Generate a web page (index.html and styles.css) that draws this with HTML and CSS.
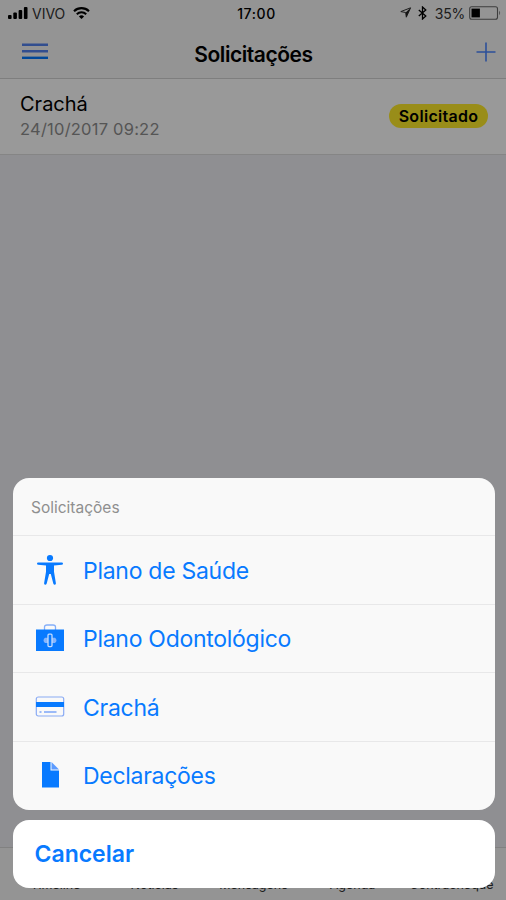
FILE: index.html
```html
<!DOCTYPE html>
<html lang="pt-BR">

<head>
    <meta charset="UTF-8">
    <meta name="viewport" content="width=device-width, initial-scale=1.0">
    <title>Solicitações</title>
    <link rel="stylesheet" href="styles.css">
</head>

<body>
    <div class="app">
        <header class="header">
            <div class="status-bar">
                <div class="status-left">
                    <svg class="signal" width="20" height="12" viewBox="0 0 20 12">
                        <rect x="0" y="8" width="3.6" height="4" rx="1" />
                        <rect x="5.3" y="5.5" width="3.6" height="6.5" rx="1" />
                        <rect x="10.6" y="3" width="3.6" height="9" rx="1" />
                        <rect x="15.9" y="0" width="3.6" height="12" rx="1" />
                    </svg>
                    <span class="carrier">VIVO</span>
                    <svg class="wifi" width="17" height="12" viewBox="0 0 17 12">
                        <path d="M1 4.2a10.8 10.8 0 0 1 15 0M3.8 7.2a6.8 6.8 0 0 1 9.4 0" fill="none" stroke="#000" stroke-width="2.1" />
                        <path d="M8.5 12L5.9 9.5a3.8 3.8 0 0 1 5.2 0z" />
                    </svg>
                </div>
                <span class="clock">17:00</span>
                <div class="status-right">
                    <svg class="location" width="12" height="12" viewBox="0 0 12 12">
                        <path d="M10.6 .8L.8 4.6l4.9.9.6 4.7z" fill="none" stroke="#333" stroke-width="1" stroke-linejoin="round" />
                        <path d="M10.6 .8L5.7 5.5l.6 4.7z" fill="#222" />
                    </svg>
                    <svg class="bluetooth" width="9" height="14" viewBox="0 0 9 14">
                        <path d="M.8 3.9l7 6.1-3.3 3V1l3.3 3-7 6.1" fill="none" stroke="#000" stroke-width="1.3" />
                    </svg>
                    <span class="percent">35%</span>
                    <svg class="battery" width="33" height="14" viewBox="0 0 33 14">
                        <rect x=".7" y=".7" width="27.8" height="12.6" rx="2" fill="none" stroke="#666" stroke-width="1.1" />
                        <rect x="2.5" y="2.6" width="8.4" height="8.8" />
                        <path d="M30.2 4.8q1.9 2.2 0 4.4z" fill="#777" />
                    </svg>
                </div>
            </div>
            <div class="nav-bar">
                <svg class="menu" width="26" height="17" viewBox="0 0 26 17">
                    <path d="M0 1.8h26M0 8.2h26" stroke="#5483ef" stroke-width="2.4" />
                    <path d="M0 14.8h26" stroke="#0078ff" stroke-width="2.4" />
                </svg>
                <h1 class="title">Solicitações</h1>
                <svg class="add" width="20" height="20" viewBox="0 0 20 20">
                    <path d="M10 .5v19M.5 10h19" stroke="#4a85ff" stroke-width="1.6" />
                </svg>
            </div>
        </header>

        <main class="content">
            <div class="request">
                <div>
                    <div class="request-name">Crachá</div>
                    <div class="request-date">24/10/2017 09:22</div>
                </div>
                <span class="badge">Solicitado</span>
            </div>
        </main>

        <nav class="tabs">
            <span>Timeline</span>
            <span>Notícias</span>
            <span>Mensagens</span>
            <span>Agenda</span>
            <span>Contracheque</span>
        </nav>
    </div>

    <div class="overlay">
        <div class="sheet">
            <div class="sheet-title">Solicitações</div>
            <div class="option">
                <svg class="icon" width="30" height="32" viewBox="0 0 30 32">
                    <circle cx="15" cy="4" r="3.1" />
                    <path d="M3.2 8.4h23.6a1.1 1.1 0 0 1 0 2.4L19 11.6v6.2l1.9 11.4a1.3 1.3 0 0 1-2.6.4L15.8 20h-1.6l-2.5 9.6a1.3 1.3 0 0 1-2.6-.4L11 17.8v-6.2l-7.8-.8a1.1 1.1 0 0 1 0-2.4z" />
                </svg>
                <span>Plano de Saúde</span>
            </div>
            <div class="option">
                <svg class="icon" width="30" height="32" viewBox="0 0 30 32">
                    <path d="M9.5 7V4q0-2 2.5-2h6q2.5 0 2.5 2v3" fill="none" stroke="#84aef9" stroke-width="1.3" />
                    <path d="M1 6.5h28V28H1z" />
                    <path d="M10 14.8h10q1.5 1.2 1.5 2.6T20 20H10q-1.5-1.2-1.5-2.6t1.5-2.6z" fill="#87b5fb" />
                    <rect x="13" y="11.2" width="4" height="12.4" rx="1" stroke="#c4dcff" stroke-width="1.3" />
                </svg>
                <span>Plano Odontológico</span>
            </div>
            <div class="option">
                <svg class="icon" width="30" height="32" viewBox="0 0 30 32">
                    <rect x="1.3" y="6" width="27.4" height="19" rx="2" fill="none" stroke="#8aabf4" stroke-width="1.2" />
                    <path d="M1 11h28v5H1z" />
                    <path d="M4.5 21h2M9 21h12.5" stroke="#7ca5f7" stroke-width="1.3" />
                </svg>
                <span>Crachá</span>
            </div>
            <div class="option">
                <svg class="icon" width="30" height="32" viewBox="0 0 30 32">
                    <path d="M7 2h8.5v8.5H24v17H7z" />
                    <path d="M16.5 2L24 9.5h-7.5z" fill="#5c9bff" />
                </svg>
                <span>Declarações</span>
            </div>
        </div>
        <div class="cancel">Cancelar</div>
    </div>
</body>

</html>
```
FILE: styles.css
```css
* {
    box-sizing: border-box;
}

body {
    margin: 0;
    font-family: Inter, "Liberation Sans", sans-serif;
    color: #000;
    height: 900px;
    overflow: hidden;
}

svg {
    display: block;
    flex-shrink: 0;
}

.app {
    height: 900px;
    display: flex;
    flex-direction: column;
    background-color: #efeff4;
}

.header {
    height: 79px;
    background-color: #f7f7f7;
    border-bottom: 1px solid #d2d2d2;
}

.status-bar {
    height: 26px;
    padding: 0 4px 0 8px;
    display: grid;
    grid-template-columns: 1fr auto 1fr;
    align-items: center;
    font-size: 14px;
}

.status-left,
.status-right {
    display: flex;
    align-items: center;
}

.status-right {
    justify-content: flex-end;
}

.carrier {
    margin: 0 8px 0 4px;
    color: #333;
}

.clock {
    padding-left: 3px;
    font-weight: 500;
    letter-spacing: 0.6px;
}

.location {
    margin-right: 6px;
}

.bluetooth {
    margin-right: 8px;
}

.percent {
    margin-right: 4px;
    color: #333;
    letter-spacing: -0.2px;
}

.nav-bar {
    height: 52px;
    display: grid;
    grid-template-columns: 1fr auto 1fr;
    align-items: center;
    padding: 0 10px 0 22px;
}

.menu {
    margin-bottom: 2px;
}

.title {
    margin: 6px 0 0 -11px;
    font-size: 21px;
    line-height: 26px;
    font-weight: 600;
    letter-spacing: -0.45px;
}

.add {
    justify-self: end;
}

.content {
    flex: 1;
}

.request {
    height: 76px;
    padding: 0 18px 0 20px;
    display: flex;
    justify-content: space-between;
    align-items: center;
    background-color: #fff;
    border-bottom: 1px solid #dedede;
}

.request-name {
    font-size: 20px;
    line-height: 26px;
}

.request-date {
    font-size: 16.5px;
    line-height: 25px;
    letter-spacing: 0.22px;
    color: #8e8e8e;
}

.badge {
    width: 99px;
    height: 24px;
    margin-bottom: 2px;
    border-radius: 12px;
    background-color: #ffec2b;
    font-size: 16px;
    line-height: 25px;
    font-weight: 600;
    letter-spacing: 0.3px;
    text-align: center;
}

.tabs {
    height: 53px;
    padding: 29px 5px 0 6px;
    display: grid;
    grid-template-columns: repeat(5, 1fr);
    background-color: #f7f7f7;
    border-top: 1px solid #d8d8d8;
    font-size: 12.5px;
    line-height: 15px;
    color: #333;
    text-align: center;
}

/* action sheet over the dimmed page */
.overlay {
    position: absolute;
    inset: 0;
    display: flex;
    flex-direction: column;
    justify-content: flex-end;
    gap: 10px;
    padding: 0 11.5px 12px 12.5px;
    background-color: rgba(0, 0, 0, 0.4);
    color: #087aff;
}

.sheet,
.cancel {
    border-radius: 16px;
    background-color: #f9f9f9;
}

.sheet {
    height: 332px;
}

.sheet-title {
    height: 57px;
    padding-left: 18.5px;
    font-size: 15.5px;
    line-height: 59px;
    color: #8f8f8f;
}

.option {
    height: 68.5px;
    padding: 1px 0 0 22.5px;
    display: flex;
    align-items: center;
    gap: 18px;
    border-top: 1px solid #e8e8e9;
    font-size: 23px;
    letter-spacing: -0.28px;
}

.option span {
    padding-top: 1px;
}

.icon {
    fill: #087aff;
}

.cancel {
    height: 68px;
    padding-left: 22px;
    background-color: #fff;
    font-size: 23px;
    line-height: 69px;
    font-weight: 600;
}
```
